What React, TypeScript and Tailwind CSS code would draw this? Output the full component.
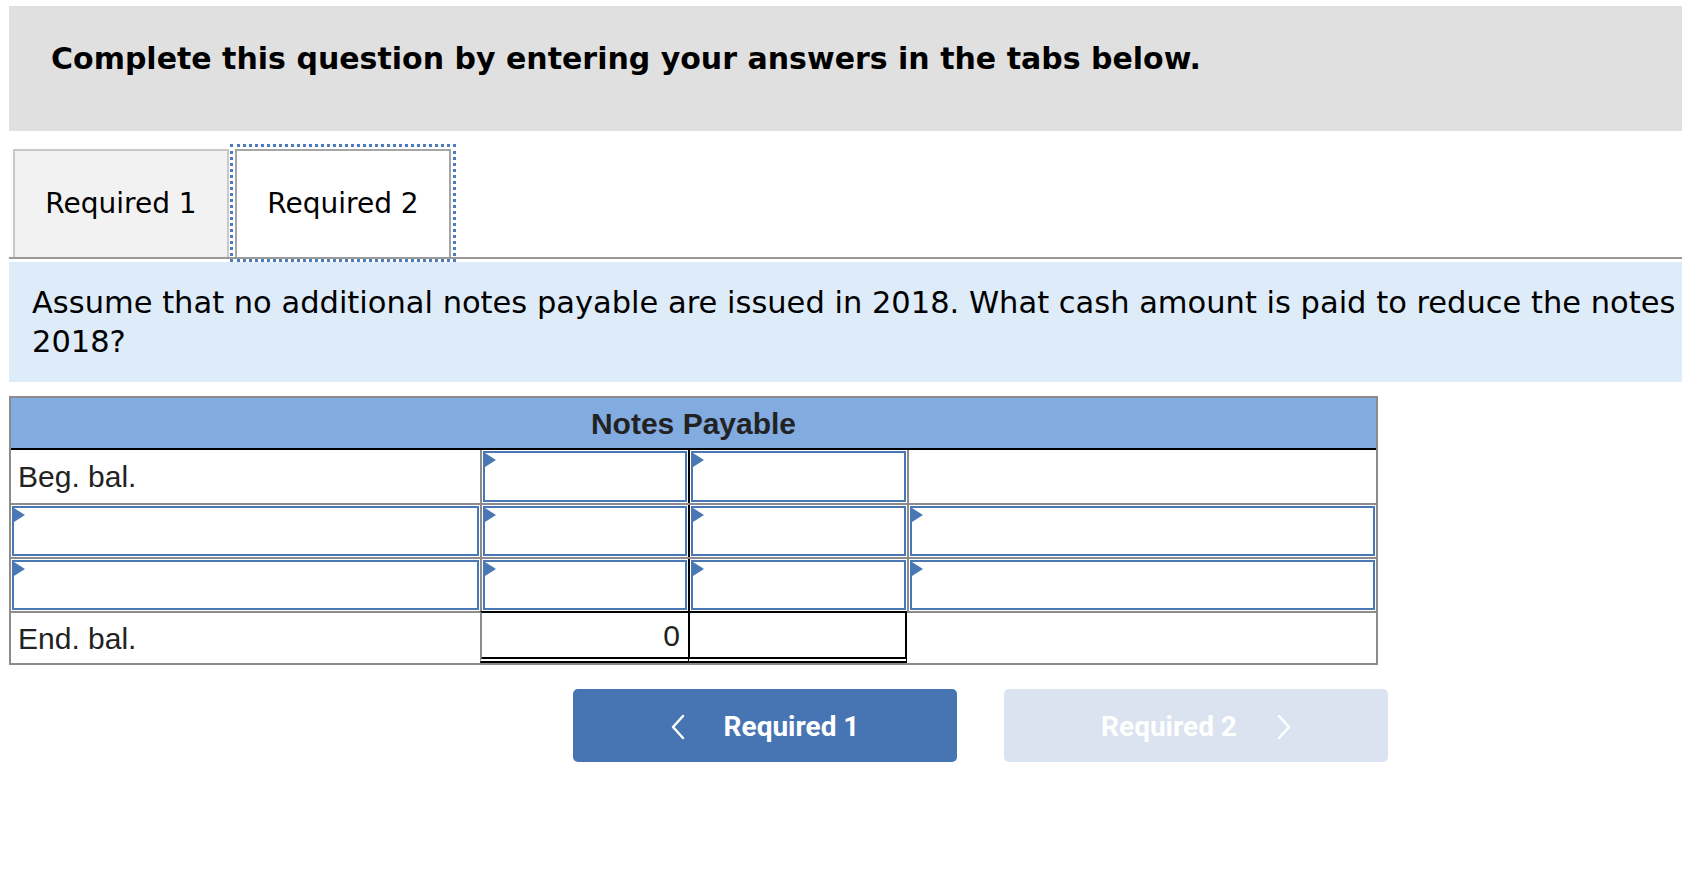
import React from "react";

const flag = (
  <svg width="11" height="14" viewBox="0 0 11 14" className="absolute left-0 top-0">
    <polygon points="0,0 11,7 0,14" fill="#4a78b5" />
  </svg>
);

function InputCell({ className = "" }: { className?: string }) {
  return (
    <div className={"h-full p-[1px] " + className}>
      <div className="relative h-full border-2 border-[#4a78b5] bg-white">{flag}</div>
    </div>
  );
}

function Chevron({ dir }: { dir: "left" | "right" }) {
  return (
    <svg width="14" height="26" viewBox="0 0 14 26">
      <polyline
        points={dir === "left" ? "12,2 2,13 12,24" : "2,2 12,13 2,24"}
        fill="none"
        stroke="white"
        strokeWidth="2.5"
        strokeLinecap="round"
        strokeLinejoin="round"
      />
    </svg>
  );
}

export default function App() {
  const label = "font-['Liberation_Sans',Arial,sans-serif] text-[30px] text-[#222]";
  return (
    <div className="h-[874px] w-[1682px] overflow-hidden bg-white">
      <div className="w-[1905px] pl-[9px] pt-[6px]">
        {/* heading */}
        <div className="h-[125px] bg-[#e0e0e0] pl-[42px] pt-[35px]">
          <h1 className="font-['DejaVu_Sans',Verdana,sans-serif] text-[30px] font-bold leading-[36px] text-black">
            Complete this question by entering your answers in the tabs below.
          </h1>
        </div>

        {/* tabs */}
        <div className="mt-[18px] flex gap-[6px] border-b-2 border-[#9a9a9a] pl-[4px] font-['DejaVu_Sans',Verdana,sans-serif] text-[28px] text-black">
          <div className="flex h-[108px] w-[216px] items-center justify-center border-2 border-b-0 border-[#c8c8c8] bg-[#f2f2f2]">
            Required 1
          </div>
          <div className="relative z-10 flex h-[108px] w-[216px] items-center justify-center border-2 border-b-0 border-[#a6a6a6] bg-white outline-[3px] outline-offset-2 outline-[#4b7bc3] outline-dotted">
            Required 2
          </div>
        </div>

        {/* question */}
        <div className="mt-[3px] bg-[#deebf8] px-[23px] py-[21px] font-['DejaVu_Sans',Verdana,sans-serif] text-[30.5px] leading-[39px] text-black">
          Assume that no additional notes payable are issued in 2018. What cash amount is paid to reduce the notes payable in 2018?
        </div>

        {/* T-account */}
        <div className="mt-[14px] w-[1369px] border-2 border-[#8c8c8c]">
          <div className="flex h-[52px] items-center justify-center border-b-2 border-black bg-[#82abdf]">
            <span className={label + " font-bold"}>Notes Payable</span>
          </div>

          <div className="flex h-[53px]">
            <div className={"flex w-[469px] items-center pl-[7px] " + label}>Beg. bal.</div>
            <InputCell className="w-[208px] border-l-2 border-[#8c8c8c]" />
            <InputCell className="w-[219px] border-l-2 border-black" />
            <div className="flex-1 border-l-2 border-[#8c8c8c]" />
          </div>

          {[0, 1].map((i) => (
            <div key={i} className="flex h-[54px] border-t-2 border-[#8c8c8c]">
              <InputCell className="w-[469px]" />
              <InputCell className="w-[208px] border-l-2 border-[#8c8c8c]" />
              <InputCell className="w-[219px] border-l-2 border-black" />
              <InputCell className="flex-1 border-l-2 border-[#8c8c8c]" />
            </div>
          ))}

          <div className="flex h-[52px] border-t-2 border-[#8c8c8c]">
            <div className={"flex w-[469px] items-center pl-[7px] " + label}>End. bal.</div>
            <div className="-mt-[2px] flex w-[208px] items-center justify-end border-t-2 border-b-[6px] border-l-2 border-t-black border-b-black border-l-[#8c8c8c] border-double pr-[8px]">
              <span className={label}>0</span>
            </div>
            <div className="-mt-[2px] w-[219px] border-t-2 border-b-[6px] border-l-2 border-r-2 border-black border-double" />
            <div className="flex-1" />
          </div>
        </div>

        {/* nav buttons */}
        <div className="ml-[564px] mt-[24px] flex gap-[47px] font-['Roboto',sans-serif] text-[28px] font-bold text-white">
          <button className="flex h-[73px] w-[384px] items-center justify-center gap-[39px] rounded-[5px] bg-[#4775b3] pt-[3px]">
            <Chevron dir="left" />
            <span>Required 1</span>
          </button>
          <button className="flex h-[73px] w-[384px] items-center justify-center gap-[40px] rounded-[5px] bg-[#dae3ef] pt-[3px]">
            <span>Required 2</span>
            <Chevron dir="right" />
          </button>
        </div>
      </div>
    </div>
  );
}
